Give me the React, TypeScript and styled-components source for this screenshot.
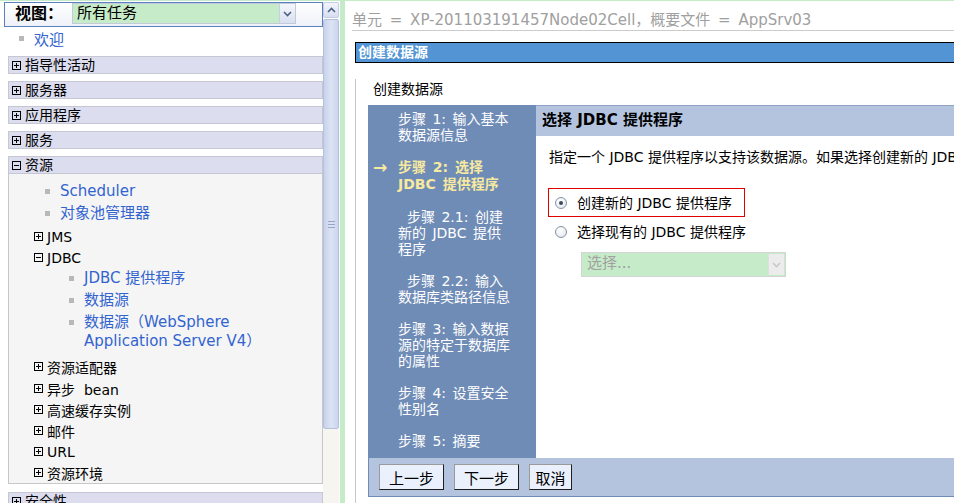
import React, { FC } from "react";
import styled, { createGlobalStyle } from "styled-components";

const GlobalStyle = createGlobalStyle`
  html, body { margin: 0; padding: 0; }
  body {
    font-family: "DejaVu Sans", "Noto Sans CJK SC", sans-serif;
    font-size: 14px;
    color: #000;
    background: #c6ebc9;
    overflow: hidden;
  }
  * { box-sizing: border-box; }
`;

// Frame layout
const Frame = styled.div`
  display: flex;
  width: 954px;
  height: 503px;
  padding-top: 1px;
  overflow: hidden;
  background: #c6ebc9;
`;

const NavPane = styled.div`
  display: flex;
  flex-shrink: 0;
  width: 340px;
  background: #fff;
`;

const NavBody = styled.div`
  width: 323px;
  overflow: hidden;
`;

// View selector
const ViewBar = styled.div`
  display: flex;
  align-items: flex-start;
  height: 25px;
  margin: 1px 0 0 4px;
  border: 1px solid #5b7fbf;
  background: linear-gradient(#ffffff, #eef1f8);
`;

const ViewLabel = styled.span`
  width: 67px;
  padding-left: 10px;
  font-size: 16px;
  font-weight: bold;
  line-height: 22px;
`;

const ViewSelect = styled.div`
  display: flex;
  width: 224px;
  height: 21px;
  border: 1px solid #c2cbd9;
  background: #c6ebc9;
`;

const SelectText = styled.span<{ $disabled?: boolean }>`
  flex: 1;
  padding-left: 4px;
  font-size: 15px;
  line-height: 19px;
  color: ${(p) => (p.$disabled ? "#a0a0a0" : "#000")};
`;

const SelectButton = styled.span<{ $disabled?: boolean }>`
  display: flex;
  align-items: center;
  justify-content: center;
  width: 16px;
  border-left: 1px solid ${(p) => (p.$disabled ? "#e0e0e0" : "#c7d0e2")};
  background: ${(p) =>
    p.$disabled ? "#ececec" : "linear-gradient(#f4f6fb, #d8dff0)"};
`;

// Tree
const WelcomeRow = styled.div`
  display: flex;
  align-items: center;
  height: 22px;
  margin-bottom: 1px;
  padding-left: 19px;
  font-size: 15px;
  color: #3264d0;
`;

const LinkRow = styled.div<{ $indent: number }>`
  display: flex;
  align-items: center;
  padding-left: ${(p) => p.$indent}px;
  margin: 3px 0;
  line-height: 19px;
  font-size: 15px;
  color: #3264d0;
`;

const Bullet = styled.span`
  flex-shrink: 0;
  align-self: flex-start;
  width: 5px;
  height: 5px;
  margin: 7px 10px 0 0;
  background: #b8b8b8;
`;

const WelcomeBullet = styled(Bullet)`
  align-self: center;
  margin-top: 0;
`;

const FolderRow = styled.div<{ $indent: number; $gap?: number }>`
  display: flex;
  align-items: center;
  gap: 4px;
  height: 21px;
  margin-top: ${(p) => p.$gap || 0}px;
  padding-left: ${(p) => p.$indent}px;
  font-size: 14px;
  white-space: pre;
`;

const SectionHeader = styled.div<{ $gap?: number }>`
  display: flex;
  align-items: center;
  gap: 4px;
  width: 315px;
  height: 18px;
  margin: ${(p) => p.$gap ?? 7}px 0 0 8px;
  padding-left: 3px;
  border: 1px solid #c6c7d2;
  background: #dcdeef;
  font-size: 14px;
  line-height: 16px;
`;

const SectionBody = styled.div`
  width: 315px;
  margin-left: 8px;
  padding: 5px 0 0;
  border: 1px solid #c8c8c8;
  border-top: none;
  background: #f5f5f5;
`;

const SubList = styled.div`
  margin: -2px 0 5px;
`;

// Scrollbar drawing
const ScrollBar = styled.div`
  display: flex;
  flex-direction: column;
  width: 16px;
  margin-top: 1px;
`;

const ScrollUp = styled.div`
  display: flex;
  align-items: center;
  justify-content: center;
  height: 16px;
  border: 1px solid #c3cde4;
  border-radius: 2px;
  background: linear-gradient(#f3f5fb, #d6def1);
`;

const ScrollThumb = styled.div`
  display: flex;
  align-items: center;
  justify-content: center;
  height: 410px;
  margin-top: 1px;
  border: 1px solid #b4c0dd;
  border-radius: 2px;
  background: linear-gradient(to right, #c8d2eb, #dce3f4 50%, #cbd5ec);
`;

const ScrollTrack = styled.div`
  flex: 1;
  background: #f7f5ef;
`;

// Right pane
const MainPane = styled.div`
  flex: 1;
  margin-left: 5px;
  background: #fff;
  overflow: hidden;
`;

const ContextBar = styled.div`
  height: 30px;
  margin-left: 7px;
  padding-top: 9px;
  border-bottom: 1px solid #cccccc;
  font-size: 15px;
  line-height: 20px;
  word-spacing: 3px;
  color: #a0a0a0;
  white-space: nowrap;
`;

const Dialog = styled.div`
  margin: 11px 0 0 10px;
`;

const DialogTitle = styled.div`
  height: 21px;
  padding-left: 2px;
  border: 1px solid #000;
  border-right: none;
  background: #5294d4;
  color: #fff;
  font-size: 14px;
  font-weight: bold;
  line-height: 19px;
`;

const DialogBody = styled.div`
  height: 450px;
  padding-left: 12px;
  border-left: 1px solid #c8c8c8;
`;

const PageHeading = styled.div`
  margin-top: 16px;
  padding-left: 5px;
  font-size: 14px;
  line-height: 20px;
`;

const Wizard = styled.div`
  display: grid;
  grid-template-columns: 168px 1fr;
  grid-template-rows: 353px 39px;
  margin-top: 6px;
`;

const StepList = styled.div`
  display: flex;
  flex-direction: column;
  gap: 16px;
  padding: 6px 0 0 5px;
  background: #6f8cb6;
`;

const StepRow = styled.div<{ $current?: boolean }>`
  display: flex;
  color: ${(p) => (p.$current ? "#f7e9a0" : "#fff")};
  font-weight: ${(p) => (p.$current ? "bold" : "normal")};
  font-size: 14px;
  line-height: ${(p) => (p.$current ? 17 : 16)}px;
  white-space: nowrap;
`;

const StepMarker = styled.span`
  width: 25px;
  flex-shrink: 0;
  font-size: 17px;
  line-height: 17px;
`;

const StepLine = styled.div<{ $indent?: boolean }>`
  padding-left: ${(p) => (p.$indent ? 9 : 0)}px;
  word-spacing: 2px;
`;

const StepContent = styled.div`
  overflow: hidden;
  background: #fff;
`;

const ContentHeader = styled.div`
  height: 31px;
  padding-left: 6px;
  border-top: 1px solid #8ea4c8;
  background: #b4c4de;
  font-size: 15px;
  font-weight: bold;
  line-height: 29px;
  white-space: nowrap;
`;

const Intro = styled.div`
  margin-top: 12px;
  padding-left: 13px;
  font-size: 14px;
  line-height: 18px;
  white-space: nowrap;
`;

const HighlightBox = styled.div`
  display: flex;
  align-items: center;
  width: 197px;
  height: 29px;
  margin: 22px 0 0 12px;
  padding-left: 6px;
  border: 1px solid #e00000;
`;

const RadioRow = styled.div<{ $indent?: number }>`
  display: flex;
  align-items: center;
  gap: 10px;
  margin-top: ${(p) => (p.$indent ? 5 : 0)}px;
  padding-left: ${(p) => p.$indent || 0}px;
  font-size: 14px;
  line-height: 20px;
  white-space: nowrap;
`;

const RadioCircle = styled.span<{ $checked?: boolean }>`
  position: relative;
  width: 12px;
  height: 12px;
  border: 1px solid #8593a6;
  border-radius: 50%;
  background: radial-gradient(circle at 40% 35%, #ffffff, #dfe3ea);
  &::after {
    content: "";
    display: ${(p) => (p.$checked ? "block" : "none")};
    position: absolute;
    left: 3px;
    top: 3px;
    width: 4px;
    height: 4px;
    border-radius: 50%;
    background: #3c4a5c;
  }
`;

const DisabledSelect = styled.div`
  display: flex;
  width: 205px;
  height: 25px;
  margin: 10px 0 0 45px;
  padding: 1px;
  border: 1px solid #d4d4d4;
  background: #c6ebc9;
`;

const ButtonBar = styled.div`
  grid-column: 1 / 3;
  display: flex;
  gap: 10px;
  padding: 6px 0 0 10px;
  border-left: 1px solid #6f8cb6;
  border-bottom: 1px solid #6f8cb6;
  background: #b4c4de;
`;

const WizardButton = styled.button<{ $wide?: boolean }>`
  width: ${(p) => (p.$wide ? 65 : 43)}px;
  height: 26px;
  padding: 0;
  border: 1px solid;
  border-color: #9a9a9a #1e1e1e #1e1e1e #9a9a9a;
  background: #eaf1fd;
  font-family: inherit;
  font-size: 15px;
  color: #000;
`;

const Toggle: FC<{ open?: boolean }> = ({ open }) => (
  <svg width="9" height="9" viewBox="0 0 9 9" style={{ flexShrink: 0 }}>
    <rect x="0.5" y="0.5" width="8" height="8" fill="none" stroke="#000" />
    <line x1="2" y1="4.5" x2="7" y2="4.5" stroke="#000" />
    {!open && <line x1="4.5" y1="2" x2="4.5" y2="7" stroke="#000" />}
  </svg>
);

const Chevron: FC<{ up?: boolean; color: string }> = ({ up, color }) => (
  <svg width="9" height="6" viewBox="0 0 9 6">
    <path
      d={up ? "M1 5 L4.5 1.5 L8 5" : "M1 1 L4.5 4.5 L8 1"}
      fill="none"
      stroke={color}
      strokeWidth="1.6"
    />
  </svg>
);

const Grip: FC = () => (
  <svg width="7" height="7" viewBox="0 0 7 7">
    {[0.5, 3.5, 6.5].map((y) => (
      <line key={y} x1="0" y1={y} x2="7" y2={y} stroke="#97a6c8" />
    ))}
  </svg>
);

const topSections = ["指导性活动", "服务器", "应用程序", "服务"];

const resourceFolders = ["资源适配器", "异步  bean", "高速缓存实例", "邮件", "URL", "资源环境"];

const steps = [
  { lines: ["步骤 1: 输入基本", "数据源信息"] },
  { lines: ["步骤 2: 选择", "JDBC 提供程序"], current: true },
  { lines: ["步骤 2.1: 创建", "新的 JDBC 提供", "程序"], indent: true },
  { lines: ["步骤 2.2: 输入", "数据库类路径信息"], indent: true },
  { lines: ["步骤 3: 输入数据", "源的特定于数据库", "的属性"] },
  { lines: ["步骤 4: 设置安全", "性别名"] },
  { lines: ["步骤 5: 摘要"] },
];

const App: FC = () => {
  return (
    <>
      <GlobalStyle />
      <Frame>
        <NavPane>
          <NavBody>
            <ViewBar>
              <ViewLabel>视图：</ViewLabel>
              <ViewSelect>
                <SelectText>所有任务</SelectText>
                <SelectButton>
                  <Chevron color="#4d6185" />
                </SelectButton>
              </ViewSelect>
            </ViewBar>
            <WelcomeRow>
              <WelcomeBullet />
              欢迎
            </WelcomeRow>
            {topSections.map((s) => (
              <SectionHeader key={s}>
                <Toggle />
                {s}
              </SectionHeader>
            ))}
            <SectionHeader>
              <Toggle open />
              资源
            </SectionHeader>
            <SectionBody>
              <LinkRow $indent={36}>
                <Bullet />
                Scheduler
              </LinkRow>
              <LinkRow $indent={36}>
                <Bullet />
                对象池管理器
              </LinkRow>
              <FolderRow $indent={25} $gap={3}>
                <Toggle />
                JMS
              </FolderRow>
              <FolderRow $indent={25}>
                <Toggle open />
                JDBC
              </FolderRow>
              <SubList>
                <LinkRow $indent={60}>
                  <Bullet />
                  JDBC 提供程序
                </LinkRow>
                <LinkRow $indent={60}>
                  <Bullet />
                  数据源
                </LinkRow>
                <LinkRow $indent={60}>
                  <Bullet />
                  <span>
                    数据源（WebSphere
                    <br />
                    Application Server V4）
                  </span>
                </LinkRow>
              </SubList>
              {resourceFolders.map((f, i) => (
                <FolderRow key={f} $indent={25} $gap={i === 1 ? 1 : 0}>
                  <Toggle />
                  {f}
                </FolderRow>
              ))}
            </SectionBody>
            <SectionHeader $gap={8}>
              <Toggle />
              安全性
            </SectionHeader>
          </NavBody>
          <ScrollBar>
            <ScrollUp>
              <Chevron up color="#4d6185" />
            </ScrollUp>
            <ScrollThumb>
              <Grip />
            </ScrollThumb>
            <ScrollTrack />
          </ScrollBar>
        </NavPane>

        <MainPane>
          <ContextBar>单元 = XP-201103191457Node02Cell，概要文件 = AppSrv03</ContextBar>
          <Dialog>
            <DialogTitle>创建数据源</DialogTitle>
            <DialogBody>
              <PageHeading>创建数据源</PageHeading>
              <Wizard>
                <StepList>
                  {steps.map((s, i) => (
                    <StepRow key={i} $current={s.current}>
                      <StepMarker>{s.current ? "→" : ""}</StepMarker>
                      <div>
                        {s.lines.map((l, j) => (
                          <StepLine key={j} $indent={s.indent && j === 0}>
                            {l}
                          </StepLine>
                        ))}
                      </div>
                    </StepRow>
                  ))}
                </StepList>
                <StepContent>
                  <ContentHeader>选择 JDBC 提供程序</ContentHeader>
                  <Intro>
                    指定一个 JDBC 提供程序以支持该数据源。如果选择创建新的 JDBC 提供程序，则将创建一个新的 JDBC 提供程序。
                  </Intro>
                  <HighlightBox>
                    <RadioRow>
                      <RadioCircle $checked />
                      创建新的 JDBC 提供程序
                    </RadioRow>
                  </HighlightBox>
                  <RadioRow $indent={19}>
                    <RadioCircle />
                    选择现有的 JDBC 提供程序
                  </RadioRow>
                  <DisabledSelect>
                    <SelectText $disabled>选择...</SelectText>
                    <SelectButton $disabled>
                      <Chevron color="#c8c8c8" />
                    </SelectButton>
                  </DisabledSelect>
                </StepContent>
                <ButtonBar>
                  <WizardButton $wide>上一步</WizardButton>
                  <WizardButton $wide>下一步</WizardButton>
                  <WizardButton>取消</WizardButton>
                </ButtonBar>
              </Wizard>
            </DialogBody>
          </Dialog>
        </MainPane>
      </Frame>
    </>
  );
};

export default App;
